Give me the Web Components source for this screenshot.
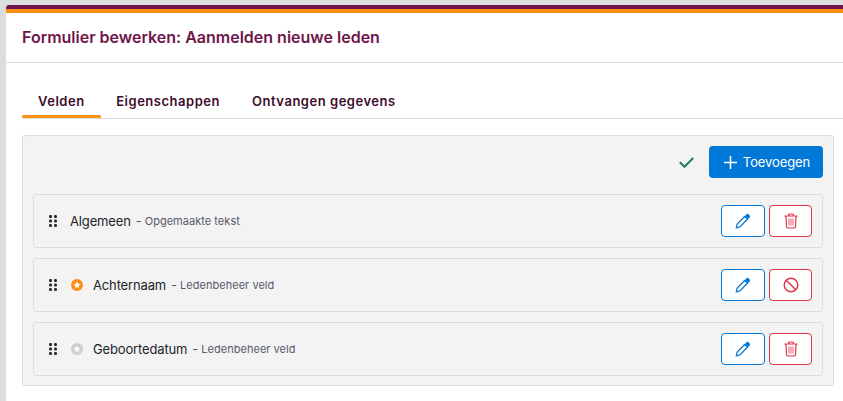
<!DOCTYPE html>
<html lang="nl">
<head>
<meta charset="utf-8">
<title>Formulier bewerken</title>
<style>
  html, body { margin: 0; height: 100%; overflow: hidden; background: #dcddde; }
  body { font-family: Inter, "Liberation Sans", sans-serif; }
</style>
</head>
<body>
<form-page title="Formulier bewerken: Aanmelden nieuwe leden">
  <form-tabs></form-tabs>
  <field-panel>
    <field-row name="Algemeen" kind="Opgemaakte tekst" action="delete"></field-row>
    <field-row name="Achternaam" kind="Ledenbeheer veld" star="on" action="block"></field-row>
    <field-row name="Geboortedatum" kind="Ledenbeheer veld" star="off" action="delete"></field-row>
  </field-panel>
</form-page>

<script>
const ICONS = {
  pencil: `<svg width="16" height="16" viewBox="0 0 16 16" fill="none">
    <path d="M1.200 14.800l.9-3.700 7.600-7.600 2.800 2.800-7.600 7.600z" stroke="currentColor" stroke-width="1.300" stroke-linejoin="round"/>
    <path d="M9.700 3l2-1.800c.5-.5 1.200-.5 1.700 0l1.400 1.400c.5.500.5 1.200 0 1.700L13 6.300z" fill="currentColor"/>
  </svg>`,
  trash: `<svg width="14" height="16" viewBox="0 0 14 16" fill="none" stroke="currentColor" stroke-width="1.200">
    <path d="M.8 3h12.400M4.600 3V1.800c0-.5.3-.8.8-.8h3.200c.5 0 .8.3.8.8V3" stroke-linecap="round"/>
    <path d="M2 3l.5 10.600c0 .8.6 1.400 1.400 1.400h6.200c.8 0 1.400-.6 1.400-1.400L12 3"/>
    <path d="M5 5.500v7M7 5.500v7M9 5.500v7" stroke-width=".8"/>
  </svg>`,
  block: `<svg width="16" height="16" viewBox="0 0 16 16" fill="none" stroke="currentColor" stroke-width="1.400">
    <circle cx="8" cy="8" r="6.800"/>
    <path d="M3.200 3.200l9.600 9.600"/>
  </svg>`,
  grip: `<svg width="8" height="12" viewBox="0 0 8 12" fill="currentColor" style="display:block">
    <rect x="0" y="0" width="3" height="3" rx="1.200"/><rect x="5" y="0" width="3" height="3" rx="1.200"/>
    <rect x="0" y="4.500" width="3" height="3" rx="1.200"/><rect x="5" y="4.500" width="3" height="3" rx="1.200"/>
    <rect x="0" y="9" width="3" height="3" rx="1.200"/><rect x="5" y="9" width="3" height="3" rx="1.200"/>
  </svg>`,
  star: `<svg width="12" height="12" viewBox="0 0 12 12" style="display:block">
    <circle cx="6" cy="6" r="6" fill="currentColor"/>
    <path d="M6 2.600l1 2.200 2.400.3-1.800 1.600.5 2.400L6 7.900 3.900 9.100l.5-2.400L2.600 5.100 5 4.800z" fill="#fff"/>
  </svg>`
};

class FormPage extends HTMLElement {
  constructor() {
    super();
    this.attachShadow({ mode: 'open' });
    this.shadowRoot.innerHTML = `
      <style>
        :host {
          display: block;
          margin: 5px 0 0 6px;
          height: 396px;
          background: #fff;
          border-radius: 3px 0 0 0;
          overflow: hidden;
        }
        .stripe { height: 4px; background: #6e1549; }
        .stripe.orange { background: #fb9016; }
        header {
          height: 50px;
          box-sizing: border-box;
          padding: 0 0 1px 16px;
          display: flex;
          align-items: center;
          border-bottom: 1px solid #dcdcdc;
          font-size: 16px;
          font-weight: 600;
          color: #6e1549;
        }
        main { padding: 22px 9px 0 16px; }
      </style>
      <div class="stripe"></div>
      <div class="stripe orange"></div>
      <header></header>
      <main><slot></slot></main>
    `;
    this.shadowRoot.querySelector('header').textContent = this.getAttribute('title');
  }
}

class FormTabs extends HTMLElement {
  constructor() {
    super();
    this.attachShadow({ mode: 'open' });
    this.shadowRoot.innerHTML = `
      <style>
        :host {
          display: flex;
          height: 33px;
          border-bottom: 1px solid #dcdcdc;
          margin-right: -9px;
          margin-bottom: 16px;
          font-size: 13px;
          font-weight: 600;
          letter-spacing: 0.52px;
          color: #3d0d2b;
        }
        span {
          box-sizing: border-box;
          height: 33px;
          padding: 8px 16px 0;
        }
        .active { position: relative; }
        .active::after {
          content: '';
          position: absolute;
          left: 0; right: 0; bottom: 0;
          height: 3px;
          border-radius: 2px;
          background: #fb9016;
        }
      </style>
      <span class="active">Velden</span>
      <span style="padding-left:15.5px">Eigenschappen</span>
      <span>Ontvangen gegevens</span>
    `;
  }
}

class FieldPanel extends HTMLElement {
  constructor() {
    super();
    this.attachShadow({ mode: 'open' });
    this.shadowRoot.innerHTML = `
      <style>
        :host {
          display: block;
          box-sizing: border-box;
          height: 251px;
          padding: 10px 10px 10px;
          background: #f3f3f3;
          border: 1px solid #dcdcdc;
          border-radius: 3px;
        }
        .top {
          display: flex;
          justify-content: flex-end;
          align-items: center;
          gap: 15px;
          height: 32px;
          margin-bottom: 16px;
        }
        .check { display: block; color: #1f7f5c; }
        button {
          display: flex;
          align-items: center;
          justify-content: center;
          gap: 6px;
          width: 114px;
          height: 32px;
          padding: 0 0 0 2px;
          border: 0;
          border-radius: 4px;
          background: #0078d7;
          color: #fff;
          font: 400 13px Inter, "Liberation Sans", sans-serif;
          letter-spacing: -0.1px;
        }
        .rows { display: flex; flex-direction: column; gap: 10px; }
      </style>
      <div class="top">
        <svg class="check" width="15" height="11" viewBox="0 0 15 11" fill="none" stroke="currentColor" stroke-width="2"><path d="M.8 5.300l4.700 4.500L14.200 1"/></svg>
        <button type="button">
          <svg width="13" height="13" viewBox="0 0 13 13" stroke="#fff" stroke-width="1.600"><path d="M6.500 0v13M0 6.500h13"/></svg>
          Toevoegen
        </button>
      </div>
      <div class="rows"><slot></slot></div>
    `;
  }
}

class FieldRow extends HTMLElement {
  constructor() {
    super();
    this.attachShadow({ mode: 'open' });
    const star = this.getAttribute('star');
    const action = this.getAttribute('action');
    this.shadowRoot.innerHTML = `
      <style>
        :host {
          display: flex;
          align-items: center;
          box-sizing: border-box;
          height: 54px;
          padding: 0 10px 0 15px;
          border: 1px solid #dcdcdc;
          border-radius: 3px;
          background: #f3f3f3;
        }
        .grip { color: #2b2b33; margin-right: 13px; }
        .star { margin-right: 10px; margin-left: 1px; }
        .star.on { color: #fb9016; }
        .star.off { color: #cfcfcf; }
        .name { font-size: 13px; letter-spacing: -0.15px; color: #212529; }
        .dash { font-size: 13px; color: #565b6b; margin: 0 3px 0 5px; }
        .kind { font-size: 11px; letter-spacing: 0.03px; color: #565b6b; }
        .actions { margin-left: auto; display: flex; gap: 4px; }
        .btn {
          display: flex;
          align-items: center;
          justify-content: center;
          box-sizing: border-box;
          height: 32px;
          background: #fff;
          border: 1px solid;
          border-radius: 4px;
        }
        .edit { width: 44px; color: #0078d7; }
        .del { width: 43px; color: #dc3545; }
      </style>
      <span class="grip">${ICONS.grip}</span>
      ${star ? `<span class="star ${star}">${ICONS.star}</span>` : ''}
      <span class="name"></span>
      <span class="dash">-</span>
      <span class="kind"></span>
      <div class="actions">
        <span class="btn edit">${ICONS.pencil}</span>
        <span class="btn del">${action === 'block' ? ICONS.block : ICONS.trash}</span>
      </div>
    `;
    this.shadowRoot.querySelector('.name').textContent = this.getAttribute('name');
    this.shadowRoot.querySelector('.kind').textContent = this.getAttribute('kind');
  }
}

customElements.define('form-page', FormPage);
customElements.define('form-tabs', FormTabs);
customElements.define('field-panel', FieldPanel);
customElements.define('field-row', FieldRow);
</script>
</body>
</html>
